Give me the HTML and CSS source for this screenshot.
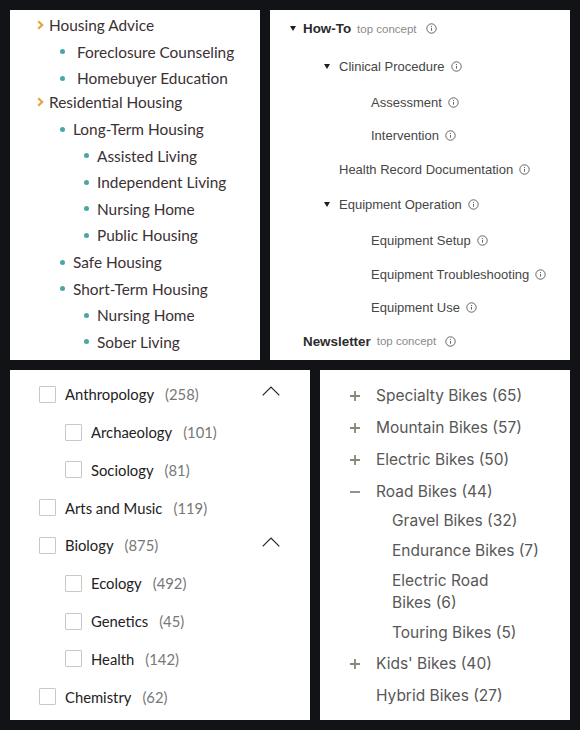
FILE: index.html
```html
<!DOCTYPE html>
<html lang="en">
<head>
<meta charset="utf-8">
<title>Tree menus</title>
<link rel="stylesheet" href="styles.css">
</head>
<body>
<main class="board">
  <div class="board-row">
    <section class="panel p-housing">
      <ul class="h-tree">
        <li>
          <div class="h-row h-l1"><svg class="chev" width="7" height="10" viewBox="0 0 7 10"><path d="M1.2 1.2 L5.2 5 L1.2 8.8" fill="none" stroke="#e6a23c" stroke-width="2.2"/></svg>Housing Advice</div>
          <ul>
            <li class="h-sub"><div class="h-row h-l2 wide"><span class="dot"></span>Foreclosure Counseling</div></li>
            <li class="h-sub"><div class="h-row h-l2 wide"><span class="dot"></span>Homebuyer Education</div></li>
          </ul>
        </li>
        <li>
          <div class="h-row h-l1"><svg class="chev" width="7" height="10" viewBox="0 0 7 10"><path d="M1.2 1.2 L5.2 5 L1.2 8.8" fill="none" stroke="#e6a23c" stroke-width="2.2"/></svg>Residential Housing</div>
          <ul>
            <li class="h-sub"><div class="h-row h-l2"><span class="dot"></span>Long-Term Housing</div>
              <ul>
                <li class="h-sub"><div class="h-row h-l3"><span class="dot"></span>Assisted Living</div></li>
                <li class="h-sub"><div class="h-row h-l3"><span class="dot"></span>Independent Living</div></li>
                <li class="h-sub"><div class="h-row h-l3"><span class="dot"></span>Nursing Home</div></li>
                <li class="h-sub"><div class="h-row h-l3"><span class="dot"></span>Public Housing</div></li>
              </ul>
            </li>
            <li class="h-sub"><div class="h-row h-l2"><span class="dot"></span>Safe Housing</div></li>
            <li class="h-sub"><div class="h-row h-l2"><span class="dot"></span>Short-Term Housing</div>
              <ul>
                <li class="h-sub"><div class="h-row h-l3"><span class="dot"></span>Nursing Home</div></li>
                <li class="h-sub"><div class="h-row h-l3"><span class="dot"></span>Sober Living</div></li>
              </ul>
            </li>
          </ul>
        </li>
      </ul>
    </section>

    <section class="panel p-skos">
      <ul class="s-tree">
        <li>
          <div class="s-row top"><span class="tri"><svg width="6" height="5" viewBox="0 0 6 5"><path d="M0 0 H6 L3 5 Z" fill="#1f1f1f"/></svg></span><span class="s-label">How-To</span><span class="s-tag">top concept</span><svg class="info far" width="11" height="11" viewBox="0 0 11 11"><circle cx="5.5" cy="5.5" r="4.7" fill="none" stroke="#555" stroke-width="0.9"/><circle cx="5.5" cy="3.5" r="0.6" fill="#555"/><path d="M5.5 4.9 V7.7" stroke="#555" stroke-width="0.9"/></svg></div>
          <ul class="s-sub first">
            <li>
              <div class="s-row"><span class="tri"><svg width="6" height="5" viewBox="0 0 6 5"><path d="M0 0 H6 L3 5 Z" fill="#1f1f1f"/></svg></span><span class="s-label">Clinical Procedure</span><svg class="info" width="11" height="11" viewBox="0 0 11 11"><circle cx="5.5" cy="5.5" r="4.7" fill="none" stroke="#555" stroke-width="0.9"/><circle cx="5.5" cy="3.5" r="0.6" fill="#555"/><path d="M5.5 4.9 V7.7" stroke="#555" stroke-width="0.9"/></svg></div>
              <ul class="s-sub">
                <li><div class="s-row"><span class="tri"></span><span class="s-label">Assessment</span><svg class="info" width="11" height="11" viewBox="0 0 11 11"><circle cx="5.5" cy="5.5" r="4.7" fill="none" stroke="#555" stroke-width="0.9"/><circle cx="5.5" cy="3.5" r="0.6" fill="#555"/><path d="M5.5 4.9 V7.7" stroke="#555" stroke-width="0.9"/></svg></div></li>
                <li><div class="s-row"><span class="tri"></span><span class="s-label">Intervention</span><svg class="info" width="11" height="11" viewBox="0 0 11 11"><circle cx="5.5" cy="5.5" r="4.7" fill="none" stroke="#555" stroke-width="0.9"/><circle cx="5.5" cy="3.5" r="0.6" fill="#555"/><path d="M5.5 4.9 V7.7" stroke="#555" stroke-width="0.9"/></svg></div></li>
              </ul>
            </li>
            <li><div class="s-row"><span class="tri"></span><span class="s-label">Health Record Documentation</span><svg class="info" width="11" height="11" viewBox="0 0 11 11"><circle cx="5.5" cy="5.5" r="4.7" fill="none" stroke="#555" stroke-width="0.9"/><circle cx="5.5" cy="3.5" r="0.6" fill="#555"/><path d="M5.5 4.9 V7.7" stroke="#555" stroke-width="0.9"/></svg></div></li>
            <li class="s-gap">
              <div class="s-row"><span class="tri"><svg width="6" height="5" viewBox="0 0 6 5"><path d="M0 0 H6 L3 5 Z" fill="#1f1f1f"/></svg></span><span class="s-label">Equipment Operation</span><svg class="info" width="11" height="11" viewBox="0 0 11 11"><circle cx="5.5" cy="5.5" r="4.7" fill="none" stroke="#555" stroke-width="0.9"/><circle cx="5.5" cy="3.5" r="0.6" fill="#555"/><path d="M5.5 4.9 V7.7" stroke="#555" stroke-width="0.9"/></svg></div>
              <ul class="s-sub">
                <li><div class="s-row"><span class="tri"></span><span class="s-label">Equipment Setup</span><svg class="info" width="11" height="11" viewBox="0 0 11 11"><circle cx="5.5" cy="5.5" r="4.7" fill="none" stroke="#555" stroke-width="0.9"/><circle cx="5.5" cy="3.5" r="0.6" fill="#555"/><path d="M5.5 4.9 V7.7" stroke="#555" stroke-width="0.9"/></svg></div></li>
                <li><div class="s-row"><span class="tri"></span><span class="s-label">Equipment Troubleshooting</span><svg class="info" width="11" height="11" viewBox="0 0 11 11"><circle cx="5.5" cy="5.5" r="4.7" fill="none" stroke="#555" stroke-width="0.9"/><circle cx="5.5" cy="3.5" r="0.6" fill="#555"/><path d="M5.5 4.9 V7.7" stroke="#555" stroke-width="0.9"/></svg></div></li>
                <li><div class="s-row"><span class="tri"></span><span class="s-label">Equipment Use</span><svg class="info" width="11" height="11" viewBox="0 0 11 11"><circle cx="5.5" cy="5.5" r="4.7" fill="none" stroke="#555" stroke-width="0.9"/><circle cx="5.5" cy="3.5" r="0.6" fill="#555"/><path d="M5.5 4.9 V7.7" stroke="#555" stroke-width="0.9"/></svg></div></li>
              </ul>
            </li>
          </ul>
        </li>
        <li><div class="s-row top"><span class="tri"></span><span class="s-label">Newsletter</span><span class="s-tag">top concept</span><svg class="info far" width="11" height="11" viewBox="0 0 11 11"><circle cx="5.5" cy="5.5" r="4.7" fill="none" stroke="#555" stroke-width="0.9"/><circle cx="5.5" cy="3.5" r="0.6" fill="#555"/><path d="M5.5 4.9 V7.7" stroke="#555" stroke-width="0.9"/></svg></div></li>
      </ul>
    </section>
  </div>

  <div class="board-row">
    <section class="panel p-subjects">
      <ul class="c-list">
        <li class="c-row"><span class="box"></span><span class="c-name">Anthropology</span><span class="c-count">(258)</span><svg class="caret" width="18" height="10" viewBox="0 0 18 10"><path d="M0.7 9.3 L9 1 L17.3 9.3" fill="none" stroke="#222" stroke-width="1.2"/></svg></li>
        <li class="c-row c-sub"><span class="box"></span><span class="c-name">Archaeology</span><span class="c-count">(101)</span></li>
        <li class="c-row c-sub"><span class="box"></span><span class="c-name">Sociology</span><span class="c-count">(81)</span></li>
        <li class="c-row"><span class="box"></span><span class="c-name">Arts and Music</span><span class="c-count">(119)</span></li>
        <li class="c-row"><span class="box"></span><span class="c-name">Biology</span><span class="c-count">(875)</span><svg class="caret" width="18" height="10" viewBox="0 0 18 10"><path d="M0.7 9.3 L9 1 L17.3 9.3" fill="none" stroke="#222" stroke-width="1.2"/></svg></li>
        <li class="c-row c-sub"><span class="box"></span><span class="c-name">Ecology</span><span class="c-count">(492)</span></li>
        <li class="c-row c-sub"><span class="box"></span><span class="c-name">Genetics</span><span class="c-count">(45)</span></li>
        <li class="c-row c-sub"><span class="box"></span><span class="c-name">Health</span><span class="c-count">(142)</span></li>
        <li class="c-row"><span class="box"></span><span class="c-name">Chemistry</span><span class="c-count">(62)</span></li>
      </ul>
    </section>

    <section class="panel p-bikes">
      <ul class="b-list">
        <li class="b-item"><span class="b-sign"><svg width="10" height="10" viewBox="0 0 10 10"><path d="M0 5 H10 M5 0 V10" stroke="#8b857b" stroke-width="1.8"/></svg></span>Specialty Bikes (65)</li>
        <li class="b-item"><span class="b-sign"><svg width="10" height="10" viewBox="0 0 10 10"><path d="M0 5 H10 M5 0 V10" stroke="#8b857b" stroke-width="1.8"/></svg></span>Mountain Bikes (57)</li>
        <li class="b-item"><span class="b-sign"><svg width="10" height="10" viewBox="0 0 10 10"><path d="M0 5 H10 M5 0 V10" stroke="#8b857b" stroke-width="1.8"/></svg></span>Electric Bikes (50)</li>
        <li class="b-item open"><span class="b-sign"><svg width="10" height="10" viewBox="0 0 10 10"><path d="M0 5 H10" stroke="#8b857b" stroke-width="1.8"/></svg></span>Road Bikes (44)</li>
        <li>
          <ul class="b-sub">
            <li>Gravel Bikes (32)</li>
            <li>Endurance Bikes (7)</li>
            <li>Electric Road<br>Bikes (6)</li>
            <li>Touring Bikes (5)</li>
          </ul>
        </li>
        <li class="b-item"><span class="b-sign"><svg width="10" height="10" viewBox="0 0 10 10"><path d="M0 5 H10 M5 0 V10" stroke="#8b857b" stroke-width="1.8"/></svg></span>Kids' Bikes (40)</li>
        <li class="b-item"><span class="b-sign"></span>Hybrid Bikes (27)</li>
      </ul>
    </section>
  </div>
</main>
</body>
</html>
```

FILE: styles.css
```css
* { box-sizing: border-box; }
html, body { margin: 0; padding: 0; }
body { background: #121316; width: 580px; height: 730px; overflow: hidden; }
ul { list-style: none; margin: 0; padding: 0; }

.board { display: flex; flex-direction: column; gap: 10px; padding: 10px; }
.board-row { display: flex; gap: 10px; height: 350px; }
.panel { background: #fff; height: 350px; }

/* Top-left: housing tree */
.p-housing { width: 250px; padding: 3.3px 0 0 27px; font-family: Lato, "Open Sans", sans-serif; font-size: 15.4px; color: #3b3134; }
.h-row { display: flex; align-items: center; height: 24px; white-space: nowrap; }
.h-sub { padding-top: 2.6px; }
.chev { margin-right: 5px; flex: none; }
.dot { width: 5px; height: 5px; border-radius: 50%; background: #4aa7a2; flex: none; margin-right: 8.5px; }
.h-l2 { padding-left: 22.5px; }
.h-l2.wide .dot { margin-right: 12.5px; }
.h-l3 { padding-left: 46.5px; }

/* Top-right: concept tree */
.p-skos { width: 300px; padding: 2.2px 0 0 20px; font-family: "Liberation Sans", Arial, sans-serif; font-size: 13px; color: #464646; }
.s-row { display: flex; align-items: center; height: 33.6px; white-space: nowrap; }
.tri { width: 13px; flex: none; display: flex; align-items: center; }
.s-sub { padding-left: 34px; margin-top: 2px; }
.s-sub .tri { width: 15px; }
.s-sub .s-sub { padding-left: 32px; }
.s-sub.first { margin-top: 4px; }
.s-gap { margin-top: 2px; }
.s-row.top .s-label { font-weight: 700; font-size: 13.4px; color: #2b2b2b; }
.s-tag { font-size: 11.5px; color: #8a8a8a; margin-left: 6px; }
.info { margin-left: 6px; flex: none; }
.info.far { margin-left: 9px; }

/* Bottom-left: checkbox facets */
.p-subjects { width: 300px; padding: 5.4px 30px 0 29px; font-family: Lato, "Open Sans", sans-serif; font-size: 14.8px; color: #222; }
.c-row { display: flex; align-items: center; height: 37.8px; }
.c-sub { padding-left: 26px; }
.box { width: 17px; height: 17px; border: 1px solid #c8c8c8; border-radius: 1px; flex: none; margin-right: 9px; }
.c-count { color: #777; margin-left: 11px; }
.caret { margin-left: auto; flex: none; margin-top: -6px; }

/* Bottom-right: bikes */
.p-bikes { width: 250px; padding: 9.7px 28px 0 30px; font-family: Inter, "Liberation Sans", sans-serif; font-size: 15.5px; color: #575757; }
.b-item { display: flex; align-items: center; line-height: 22px; padding: 5px 0; }
.b-sign { width: 26px; flex: none; display: flex; align-items: center; }
.b-sub { padding-left: 42px; margin-top: -2px; line-height: 22px; }
.b-sub li { padding: 4px 0; }
```
